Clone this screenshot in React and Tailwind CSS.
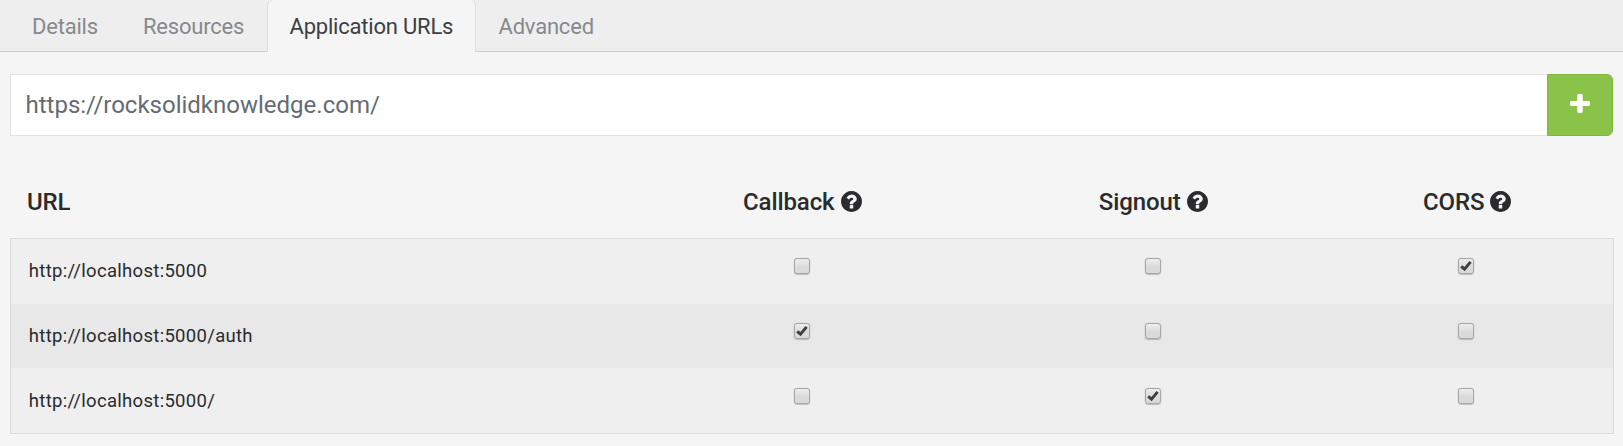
const tabs = ["Details", "Resources", "Application URLs", "Advanced"];
const tabStyles = [
  "w-[112px] pl-[22px]",
  "w-[145px] pl-[21px]",
  "w-[209px] border-x border-[#ddd] bg-[#f5f5f5] rounded-t-md pl-[21.5px] text-[#3c4044] h-[52px]",
  "w-[140px] pl-[22.5px]",
];

const rows = [
  { url: "http://localhost:5000", checks: [false, false, true] },
  { url: "http://localhost:5000/auth", checks: [true, false, false] },
  { url: "http://localhost:5000/", checks: [false, true, false] },
];

const rowStyles = [
  "h-[65px] border-b border-[#efefef] bg-[#efefef]",
  "h-[65px] border-b border-[#efefef] bg-[#e8e8e8]",
  "h-[64px] bg-[#efefef]",
];

function HelpIcon() {
  return (
    <svg viewBox="0 0 1536 1536" className="ml-1.5 size-[21px] shrink-0" fill="currentColor" aria-hidden="true">
      <path transform="translate(-128 -128)" d="M1024 1376v-192q0-14-9-23t-23-9h-192q-14 0-23 9t-9 23v192q0 14 9 23t23 9h192q14 0 23-9t9-23zm256-672q0-88-55.5-163t-138.5-116-170-41q-243 0-371 213-15 24 8 42l132 100q7 6 19 6 16 0 25-12 53-68 86-92 34-24 86-24 48 0 85.5 26t37.5 59q0 38-20 61t-68 45q-63 28-115.5 86.5t-52.5 125.5v36q0 14 9 23t23 9h192q14 0 23-9t9-23q0-19 21.5-49.5t54.5-49.5q32-18 49-28.5t46-35 44.5-48 28-60.5 12.5-81zm384 192q0 209-103 385.5t-279.5 279.5-385.5 103-385.5-103-279.5-279.5-103-385.5 103-385.5 279.5-279.5 385.5-103 385.5 103 279.5 279.5 103 385.5z" />
    </svg>
  );
}

function PlusIcon() {
  return (
    <svg viewBox="0 0 1408 1408" className="h-[19px] w-5" preserveAspectRatio="none" fill="currentColor" aria-hidden="true">
      <path transform="translate(-192 -128)" d="M1600 736v192q0 40-28 68t-68 28h-416v416q0 40-28 68t-68 28h-192q-40 0-68-28t-28-68v-416h-416q-40 0-68-28t-28-68v-192q0-40 28-68t68-28h416v-416q0-40 28-68t68-28h192q40 0 68 28t28 68v416h416q40 0 68 28t28 68z" />
    </svg>
  );
}

function Checkbox({ checked }) {
  return (
    <span
      role="checkbox"
      aria-checked={checked}
      className="mt-[19px] flex size-4 items-center justify-center rounded-[3px] border border-[#a6a6a6] bg-linear-to-b from-[#ededed] to-[#dadada] to-60% shadow-[0_1px_1px_rgba(0,0,0,0.18),0_0_1px_rgba(0,0,0,0.25)]"
    >
      {checked && (
        <svg viewBox="0 0 12 12" className="size-3" aria-hidden="true">
          <path d="M1.2 6.3 4.5 9.2 10.6 1.9" fill="none" stroke="#404040" strokeWidth="3" />
        </svg>
      )}
    </span>
  );
}

export default function App() {
  return (
    <div className="h-[446px] w-full overflow-hidden bg-[#f5f5f5] font-['Roboto',sans-serif] text-[#292b2c]">
      <nav className="flex h-[52px] border-b border-[#ccc] bg-[#eee] pl-2.5 text-[22px] leading-[54px] tracking-[-0.2px] text-[#868a8e]">
        {tabs.map((tab, i) => (
          <div key={tab} className={`shrink-0 whitespace-nowrap ${tabStyles[i]}`}>
            {tab}
          </div>
        ))}
      </nav>
      <div className="mt-[22px] ml-2.5 flex h-[62px] w-[1603px]">
        <div className="flex flex-1 items-center border border-r-0 border-[#e2e2e2] bg-white pl-[14.5px] text-2xl text-[#646c73]">
          https://rocksolidknowledge.com/
        </div>
        <button className="flex w-[66px] items-center justify-center rounded-r-md border border-[#7cb83a] bg-[#8bc34a] pb-[3px] text-white">
          <PlusIcon />
        </button>
      </div>
      <div className="mt-[38px] ml-2.5 w-[1604px]">
        <div className="grid h-16 grid-cols-[607px_369px_333px_295px] pb-[9px] text-2xl leading-[57px] font-medium tracking-[-0.1px]">
          <div className="pl-[17px]">URL</div>
          {["Callback", "Signout", "CORS"].map((name) => (
            <div key={name} className="flex h-[55px] items-center justify-center pl-[1.5px]">
              <span className="pt-0.5">{name}</span>
              <HelpIcon />
            </div>
          ))}
        </div>
        <div className="border border-[#dadada]">
          {rows.map((row, i) => (
            <div key={row.url} className={`grid grid-cols-[606px_369px_333px_294px] ${rowStyles[i]}`}>
              <div className="pl-[17.8px] text-[18.5px] leading-[64px] tracking-[0.3px]">{row.url}</div>
              {row.checks.map((checked, c) => (
                <div key={c} className="flex justify-center">
                  <Checkbox checked={checked} />
                </div>
              ))}
            </div>
          ))}
        </div>
      </div>
    </div>
  );
}
